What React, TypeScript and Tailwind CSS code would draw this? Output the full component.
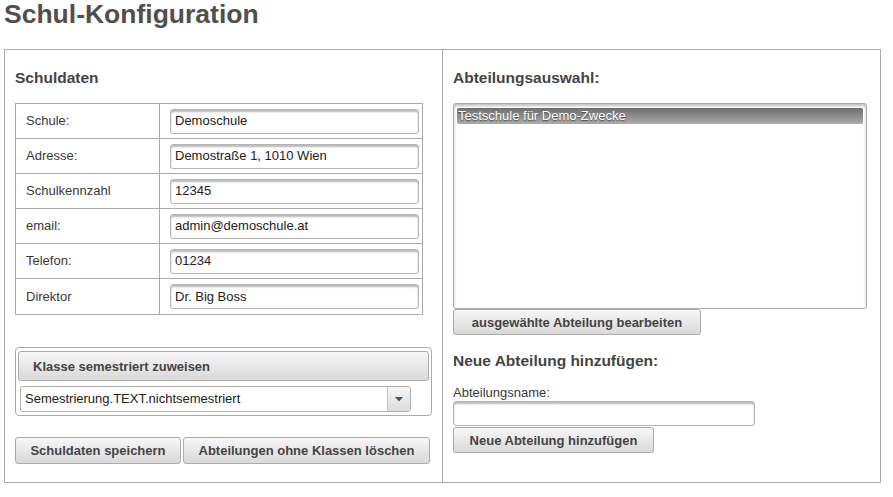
import React from "react";

const font = { fontFamily: '"Liberation Sans", Arial, sans-serif' };

const btn =
  "box-border border border-[#ababab] rounded-[3px] bg-gradient-to-b from-[#f7f7f7] to-[#d9d9d9] text-[13px] font-bold text-[#444] leading-none flex items-center justify-center";

const inputCls =
  "box-border border border-[#b5b5b5] rounded-[3px] bg-white shadow-[inset_0_2px_2px_rgba(0,0,0,0.28)] text-[13px] text-[#222] flex items-center pl-[4px]";

const rows: [string, string][] = [
  ["Schule:", "Demoschule"],
  ["Adresse:", "Demostraße 1, 1010 Wien"],
  ["Schulkennzahl", "12345"],
  ["email:", "admin@demoschule.at"],
  ["Telefon:", "01234"],
  ["Direktor", "Dr. Big Boss"],
];

export default function App() {
  return (
    <div className="w-[893px] h-[497px] bg-white text-[#444]" style={font}>
      <h1 className="pl-[4px] text-[26.5px] leading-[29px] font-bold text-[#4f4f4f]">
        Schul-Konfiguration
      </h1>
      <div className="mt-[20px] ml-[4px] w-[877px] h-[434px] border border-[#ababab] flex box-border">
        {/* left column */}
        <div className="w-[438px] border-r border-[#ababab] pl-[10px] pt-[19px] box-border">
          <h2 className="text-[15.5px] leading-[18px] font-bold text-[#444]">Schuldaten</h2>
          <div className="mt-[16px] w-[408px] border border-[#ababab] box-border">
            {rows.map(([label, value], i) => (
              <div
                key={label}
                className={`flex h-[35px] box-border ${i < rows.length - 1 ? "border-b border-[#ababab]" : "h-[34px]"}`}
              >
                <div className="w-[144px] border-r border-[#ababab] box-border pl-[10px] flex items-center text-[13px] text-[#3a3a3a]">
                  {label}
                </div>
                <div className="flex-1 flex items-center pl-[10px]">
                  <div className={`${inputCls} w-[249px] h-[25px]`}>{value}</div>
                </div>
              </div>
            ))}
          </div>

          <div className="mt-[32px] w-[417px] h-[69px] border border-[#ababab] rounded-[4px] box-border px-[2px] pt-[3px]">
            <div className={`${btn} h-[30px] w-[411px] !justify-start pl-[14px] text-[#333]`}>
              Klasse semestriert zuweisen
            </div>
            <div className="mt-[5px] ml-[2px] w-[391px] h-[26px] border border-[#b0b0b0] rounded-[3px] box-border flex bg-white">
              <div className="flex-1 flex items-center pl-[4px] text-[13px] text-[#222]">
                Semestrierung.TEXT.nichtsemestriert
              </div>
              <div className="w-[23px] h-full border-l border-[#c4c4c4] bg-gradient-to-b from-[#f6f6f6] to-[#dcdcdc] rounded-r-[3px] flex items-center justify-center">
                <svg width="8" height="5" viewBox="0 0 8 5">
                  <polygon points="0,0 8,0 4,4.5" fill="#3e5a72" />
                </svg>
              </div>
            </div>
          </div>

          <div className="mt-[21px] flex gap-[2px]">
            <div className={`${btn} h-[27px] w-[166px]`}>Schuldaten speichern</div>
            <div className={`${btn} h-[27px] w-[247px]`}>Abteilungen ohne Klassen löschen</div>
          </div>
        </div>

        {/* right column */}
        <div className="flex-1 pl-[10px] pt-[19px] box-border">
          <h2 className="text-[15.5px] leading-[18px] font-bold text-[#444]">Abteilungsauswahl:</h2>
          <div className="mt-[16px] w-[414px] h-[206px] border border-[#ababab] rounded-[3px] box-border shadow-[inset_0_2px_3px_rgba(0,0,0,0.25)] bg-white px-[3px] pt-[4px]">
            <div className="h-[16px] rounded-[2px] bg-gradient-to-b from-[#6f6f6f] to-[#ababab] text-white text-[13px] leading-[16px] pl-[1px] [text-shadow:0_1px_1px_rgba(0,0,0,0.5)]">
              Testschule für Demo-Zwecke
            </div>
          </div>
          <div className={`${btn} h-[26px] w-[248px]`}>ausgewählte Abteilung bearbeiten</div>

          <h2 className="mt-[17px] text-[15.5px] leading-[18px] font-bold text-[#444]">
            Neue Abteilung hinzufügen:
          </h2>
          <div className="mt-[15px] text-[13px] leading-[15px] text-[#3a3a3a]">Abteilungsname:</div>
          <div className={`${inputCls} mt-[1px] w-[302px] h-[25px]`}></div>
          <div className={`${btn} mt-[1px] h-[26px] w-[201px]`}>Neue Abteilung hinzufügen</div>
        </div>
      </div>
    </div>
  );
}
